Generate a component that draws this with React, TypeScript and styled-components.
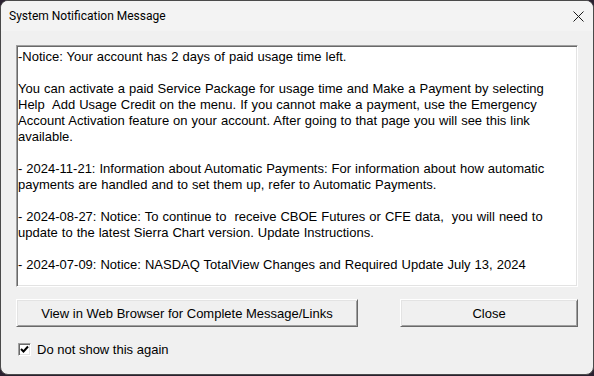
import { FC } from "react";
import styled, { createGlobalStyle } from "styled-components";

const GlobalStyle = createGlobalStyle`
  html, body {
    margin: 0;
    padding: 0;
    background: #2a2130;
  }
`;

const StyledWindow = styled.div`
  width: 594px;
  height: 375px;
  box-sizing: border-box;
  border: 1px solid #4a4a4a;
  border-radius: 8px;
  overflow: hidden;
  background: #f0f0f0;
  display: flex;
  flex-direction: column;
`;

const StyledTitleBar = styled.div`
  height: 30px;
  flex: none;
  display: flex;
  align-items: center;
  justify-content: space-between;
  padding: 0 0 0 8px;
  background: #f3f3f3;
  font-family: "Segoe UI", Roboto, "Noto Sans", sans-serif;
  font-size: 12px;
  color: #000;
`;

const StyledCloseGlyph = styled.div`
  width: 30px;
  height: 30px;
  display: flex;
  align-items: center;
  justify-content: center;
  margin-right: 0;
`;

const StyledClient = styled.div`
  flex: 1;
  display: flex;
  flex-direction: column;
  padding: 14px 15px 0 15px;
  font-family: "Liberation Sans", Arial, sans-serif;
  font-size: 13px;
  color: #000;
`;

const StyledMessageBox = styled.div`
  height: 242px;
  box-sizing: border-box;
  background: #fff;
  border-style: solid;
  border-width: 1px;
  border-color: #a0a0a0 #fff #fff #a0a0a0;
  box-shadow: inset 1px 1px 0 #696969, inset -1px -1px 0 #e3e3e3;
  padding: 3px 2px 0 1px;
  white-space: pre;
  line-height: 16px;
  word-spacing: 0.4px;
  overflow: hidden;
`;

const StyledButtonRow = styled.div`
  display: flex;
  justify-content: space-between;
  margin-top: 12px;
`;

const StyledButton = styled.button<{ $width: number }>`
  width: ${(p) => p.$width}px;
  height: 28px;
  box-sizing: border-box;
  background: #f0f0f0;
  border-style: solid;
  border-width: 1px;
  border-color: #fff #696969 #696969 #fff;
  box-shadow: inset 1px 1px 0 #e3e3e3, inset -1px -1px 0 #a0a0a0;
  font-family: "Liberation Sans", Arial, sans-serif;
  font-size: 13px;
  color: #000;
  padding: 0;
  margin: 0;
`;

const StyledCheckRow = styled.label`
  display: flex;
  align-items: center;
  gap: 6px;
  margin-top: 15px;
  padding-left: 2px;
`;

const StyledCheckBox = styled.span`
  width: 13px;
  height: 13px;
  box-sizing: border-box;
  background: #fff;
  border-style: solid;
  border-width: 1px;
  border-color: #a0a0a0 #fff #fff #a0a0a0;
  box-shadow: inset 1px 1px 0 #696969, inset -1px -1px 0 #e3e3e3;
  display: flex;
  align-items: center;
  justify-content: center;
`;

const messageLines = [
  "-Notice: Your account has 2 days of paid usage time left.",
  "",
  "You can activate a paid Service Package for usage time and Make a Payment by selecting",
  "Help  Add Usage Credit on the menu. If you cannot make a payment, use the Emergency",
  "Account Activation feature on your account. After going to that page you will see this link",
  "available.",
  "",
  "- 2024-11-21: Information about Automatic Payments: For information about how automatic",
  "payments are handled and to set them up, refer to Automatic Payments.",
  "",
  "- 2024-08-27: Notice: To continue to  receive CBOE Futures or CFE data,  you will need to",
  "update to the latest Sierra Chart version. Update Instructions.",
  "",
  "- 2024-07-09: Notice: NASDAQ TotalView Changes and Required Update July 13, 2024",
];

const App: FC = () => {
  return (
    <>
      <GlobalStyle />
      <StyledWindow>
        <StyledTitleBar>
          <span>System Notification Message</span>
          <StyledCloseGlyph>
            <svg width="11" height="11" viewBox="0 0 11 11">
              <path d="M0.5 0.5 L10.5 10.5 M10.5 0.5 L0.5 10.5" stroke="#1a1a1a" strokeWidth="1" />
            </svg>
          </StyledCloseGlyph>
        </StyledTitleBar>

        <StyledClient>
          <StyledMessageBox>{messageLines.join("\n")}</StyledMessageBox>

          <StyledButtonRow>
            <StyledButton $width={342}>View in Web Browser for Complete Message/Links</StyledButton>
            <StyledButton $width={178}>Close</StyledButton>
          </StyledButtonRow>

          <StyledCheckRow>
            <StyledCheckBox>
              <svg width="9" height="9" viewBox="0 0 9 9">
                <path d="M1 4 L3.5 6.5 L8 1.5" stroke="#000" strokeWidth="2" fill="none" />
              </svg>
            </StyledCheckBox>
            <span>Do not show this again</span>
          </StyledCheckRow>
        </StyledClient>
      </StyledWindow>
    </>
  );
};

export default App;
